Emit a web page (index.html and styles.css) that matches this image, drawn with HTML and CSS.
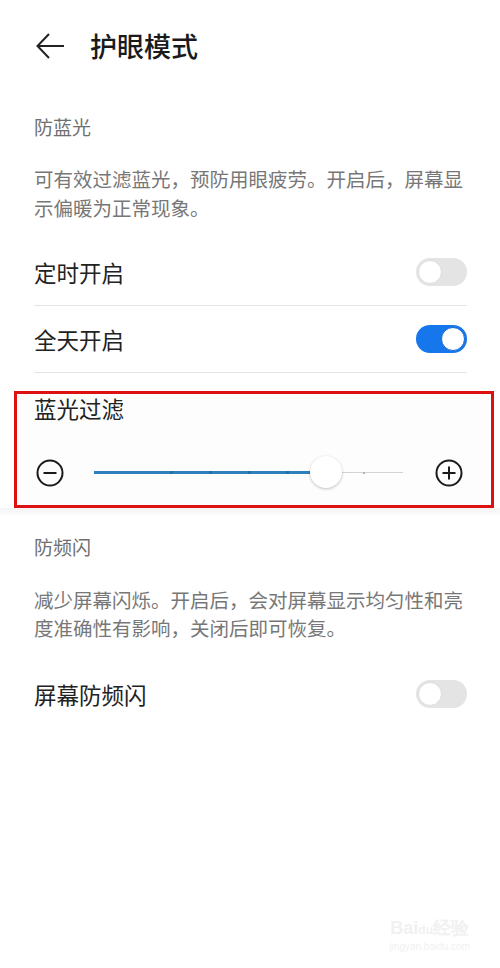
FILE: index.html
```html
<!DOCTYPE html>
<html>
<head>
    <meta charset="utf-8">
    <title>护眼模式</title>
    <link rel="stylesheet" href="styles.css">
</head>
<body>
    <div class="page">
        <div class="header">
            <svg class="back" width="28" height="26" viewBox="0 0 28 26">
                <path d="M13 1 L1.5 13 L13 25 M1.5 13 H28" fill="none" stroke="#222" stroke-width="2"/>
            </svg>
            <div class="title">护眼模式</div>
        </div>

        <div class="content">
            <div class="label label-first">防蓝光</div>
            <div class="desc desc-first">可有效过滤蓝光，预防用眼疲劳。开启后，屏幕显示偏暖为正常现象。</div>

            <div class="row row-first">
                <span>定时开启</span>
                <div class="switch"><div class="knob"></div></div>
            </div>
            <div class="row">
                <span>全天开启</span>
                <div class="switch on"><div class="knob"></div></div>
            </div>
        </div>

        <div class="mark">
            <div class="mark-title">蓝光过滤</div>
            <div class="slider">
                <svg width="30" height="30" viewBox="0 0 30 30">
                    <circle cx="15" cy="15" r="12.5" fill="none" stroke="#1a1a1a" stroke-width="2"/>
                    <path d="M8.5 15 H21.5" stroke="#1a1a1a" stroke-width="2"/>
                </svg>
                <div class="track">
                    <div class="rail"></div>
                    <div class="fill" style="width: 75%"></div>
                    <div class="tick" style="left: 25%"></div>
                    <div class="tick" style="left: 37.5%"></div>
                    <div class="tick" style="left: 50%"></div>
                    <div class="tick" style="left: 62.5%"></div>
                    <div class="tick grey" style="left: 87.5%"></div>
                    <div class="thumb" style="left: 75%"></div>
                </div>
                <svg class="plus" width="30" height="30" viewBox="0 0 30 30">
                    <circle cx="15" cy="15" r="12.5" fill="none" stroke="#1a1a1a" stroke-width="2"/>
                    <path d="M8.5 15 H21.5 M15 8.5 V21.5" stroke="#1a1a1a" stroke-width="2"/>
                </svg>
            </div>
        </div>
        <div class="band"></div>

        <div class="content">
            <div class="label label-second">防频闪</div>
            <div class="desc desc-second">减少屏幕闪烁。开启后，会对屏幕显示均匀性和亮度准确性有影响，关闭后即可恢复。</div>

            <div class="row row-last">
                <span>屏幕防频闪</span>
                <div class="switch"><div class="knob"></div></div>
            </div>
        </div>

        <div class="watermark">
            <div class="wm-logo">Bai<span class="paw">du</span>经验</div>
            <div class="wm-url">jingyan.baidu.com</div>
        </div>
    </div>
</body>
</html>
```

FILE: styles.css
```css
body {
    margin: 0;
    background: #fff;
    font-family: "Noto Sans CJK SC", "Noto Sans", sans-serif;
}

.page {
    position: relative;
    width: 500px;
    height: 968px;
    overflow: hidden;
}

.header {
    display: flex;
    align-items: center;
    height: 92px;
    padding-left: 36px;
}

.back {
    display: block;
    margin-right: 26px;
}

.title {
    font-size: 27px;
    font-weight: 500;
    color: #1a1a1a;
    line-height: 30px;
}

.content {
    padding: 0 33px 0 34px;
}

.label {
    font-size: 19px;
    line-height: 24px;
    color: #6f6f6f;
}

.label-first {
    margin-top: 23px;
}

.label-second {
    margin-top: 20px;
}

.desc {
    font-size: 19.5px;
    line-height: 29px;
    color: #777;
}

.desc-first {
    margin-top: 25px;
}

.desc-second {
    margin-top: 27px;
    line-height: 28px;
}

.row {
    display: flex;
    align-items: center;
    justify-content: space-between;
    height: 66px;
    font-size: 22.5px;
    color: #222;
    border-bottom: 1px solid #e4e4e4;
}

.row-first {
    margin-top: 17px;
}

.row-last {
    margin-top: 19px;
    border-bottom: none;
}

.switch {
    position: relative;
    width: 51px;
    height: 28px;
    border-radius: 14px;
    background: #e4e4e4;
}

.knob {
    position: absolute;
    top: 2px;
    left: 2px;
    width: 22px;
    height: 22px;
    border-radius: 50%;
    background: #fff;
    border: 1px solid #dcdcdc;
}

.switch.on {
    background: #1677ec;
}

.switch.on .knob {
    left: auto;
    right: 2px;
    border-color: #1668d0;
}

.mark {
    margin: 18px 6px 0 14px;
    border: 3px solid #dd1111;
    padding: 0 27px 12px 17px;
    background: #fdfdfd;
}

.mark-title {
    font-size: 22.5px;
    line-height: 28px;
    color: #222;
}

.slider {
    display: flex;
    align-items: center;
    height: 40px;
    margin-top: 31px;
}

.slider svg {
    display: block;
    margin-left: 1px;
}

.track {
    position: relative;
    flex: 1;
    height: 40px;
    margin: 0 30px 0 29px;
}

.rail {
    position: absolute;
    left: 0;
    right: 0;
    top: 19px;
    height: 1px;
    background: #d4d4d4;
}

.fill {
    position: absolute;
    left: 0;
    top: 18px;
    height: 3px;
    background: #2d80bb;
}

.tick {
    position: absolute;
    top: 18px;
    width: 3px;
    height: 3px;
    margin-left: -1px;
    background: #256f9f;
}

.tick.grey {
    top: 18.5px;
    width: 2px;
    height: 2px;
    background: #b4b4b4;
}

.thumb {
    position: absolute;
    top: 3px;
    width: 32px;
    height: 32px;
    margin-left: -16px;
    border-radius: 50%;
    background: #fff;
    box-shadow: 0 1px 3px rgba(0, 0, 0, 0.25);
}

.band {
    height: 7px;
    background: linear-gradient(#f4f4f4, #fbfbfb);
}

.watermark {
    position: absolute;
    right: 30px;
    bottom: 14px;
    text-align: center;
    color: #f1f1f1;
}

.wm-logo {
    font-family: "Liberation Sans", sans-serif;
    font-size: 18px;
    font-weight: bold;
    line-height: 20px;
}

.paw {
    font-size: 12px;
}

.wm-url {
    font-family: "Liberation Sans", sans-serif;
    font-size: 10px;
    line-height: 14px;
}
```
